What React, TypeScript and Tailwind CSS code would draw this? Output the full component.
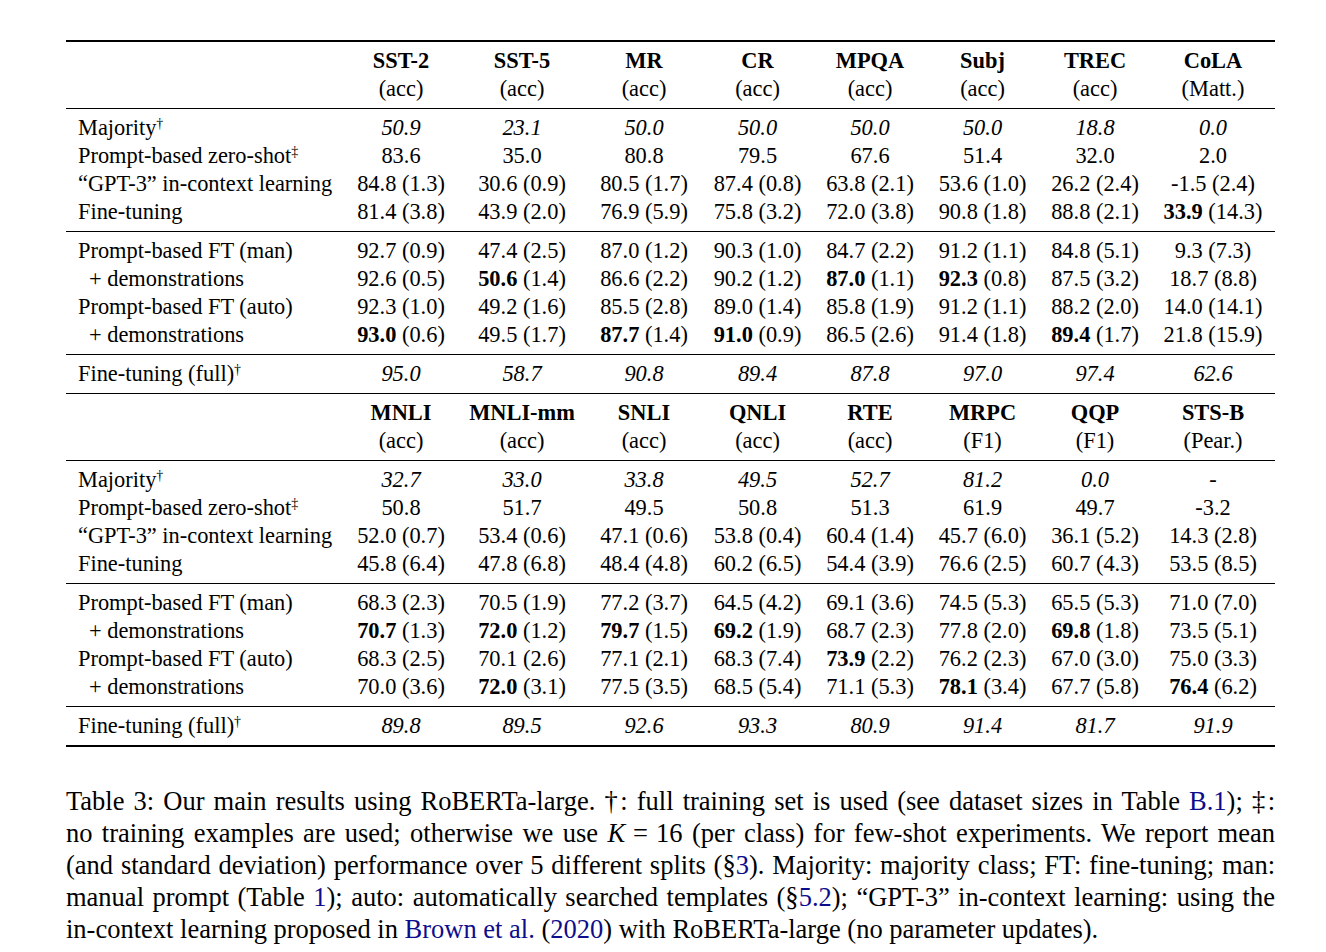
import type { ReactNode } from "react";

const COLS =
  "grid grid-cols-[279px_112px_130px_114px_113px_112px_113px_112px_124px]";

type RowData = {
  label: string;
  mark?: string;
  indent?: boolean;
  italic?: boolean;
  values: string[];
};

function Cell({ v, italic }: { v: string; italic?: boolean }) {
  // a leading * means the first number of the cell is bold
  if (v.startsWith("*")) {
    const parts = v.slice(1).split(" ");
    return (
      <span>
        <b className="font-bold">{parts[0]}</b> {parts.slice(1).join(" ")}
      </span>
    );
  }
  return <span className={italic ? "italic" : ""}>{v}</span>;
}

function Row({ row }: { row: RowData }) {
  return (
    <div className={`${COLS} h-[28px] leading-[28px]`}>
      <div className={row.indent ? "pl-[23px]" : "pl-[12px]"}>
        {row.label}
        {row.mark && <sup className="text-[14px]">{row.mark}</sup>}
      </div>
      {row.values.map((v, i) => (
        <div key={i} className="text-center whitespace-nowrap">
          <Cell v={v} italic={row.italic} />
        </div>
      ))}
    </div>
  );
}

function Header({ names, metrics }: { names: string[]; metrics: string[] }) {
  return (
    <div className="pt-[4px] pb-[5px]">
      <div className={`${COLS} h-[29px] leading-[29px] font-bold`}>
        <div />
        {names.map((n) => (
          <div key={n} className="text-center">
            {n}
          </div>
        ))}
      </div>
      <div className={`${COLS} h-[28px] leading-[28px]`}>
        <div />
        {metrics.map((m, i) => (
          <div key={i} className="text-center">
            {m}
          </div>
        ))}
      </div>
    </div>
  );
}

function Block({ rows }: { rows: RowData[] }) {
  return (
    <div className="pt-[5px] pb-[5px]">
      {rows.map((r, i) => (
        <Row key={i} row={r} />
      ))}
    </div>
  );
}

const thin = <div className="h-px bg-black" />;
const thick = <div className="h-[2px] bg-black" />;

const baseA: RowData[] = [
  { label: "Majority", mark: "†", italic: true, values: ["50.9", "23.1", "50.0", "50.0", "50.0", "50.0", "18.8", "0.0"] },
  { label: "Prompt-based zero-shot", mark: "‡", values: ["83.6", "35.0", "80.8", "79.5", "67.6", "51.4", "32.0", "2.0"] },
  { label: "“GPT-3” in-context learning", values: ["84.8 (1.3)", "30.6 (0.9)", "80.5 (1.7)", "87.4 (0.8)", "63.8 (2.1)", "53.6 (1.0)", "26.2 (2.4)", "-1.5 (2.4)"] },
  { label: "Fine-tuning", values: ["81.4 (3.8)", "43.9 (2.0)", "76.9 (5.9)", "75.8 (3.2)", "72.0 (3.8)", "90.8 (1.8)", "88.8 (2.1)", "*33.9 (14.3)"] },
];

const oursA: RowData[] = [
  { label: "Prompt-based FT (man)", values: ["92.7 (0.9)", "47.4 (2.5)", "87.0 (1.2)", "90.3 (1.0)", "84.7 (2.2)", "91.2 (1.1)", "84.8 (5.1)", "9.3 (7.3)"] },
  { label: "+ demonstrations", indent: true, values: ["92.6 (0.5)", "*50.6 (1.4)", "86.6 (2.2)", "90.2 (1.2)", "*87.0 (1.1)", "*92.3 (0.8)", "87.5 (3.2)", "18.7 (8.8)"] },
  { label: "Prompt-based FT (auto)", values: ["92.3 (1.0)", "49.2 (1.6)", "85.5 (2.8)", "89.0 (1.4)", "85.8 (1.9)", "91.2 (1.1)", "88.2 (2.0)", "14.0 (14.1)"] },
  { label: "+ demonstrations", indent: true, values: ["*93.0 (0.6)", "49.5 (1.7)", "*87.7 (1.4)", "*91.0 (0.9)", "86.5 (2.6)", "91.4 (1.8)", "*89.4 (1.7)", "21.8 (15.9)"] },
];

const fullA: RowData[] = [
  { label: "Fine-tuning (full)", mark: "†", italic: true, values: ["95.0", "58.7", "90.8", "89.4", "87.8", "97.0", "97.4", "62.6"] },
];

const baseB: RowData[] = [
  { label: "Majority", mark: "†", italic: true, values: ["32.7", "33.0", "33.8", "49.5", "52.7", "81.2", "0.0", "-"] },
  { label: "Prompt-based zero-shot", mark: "‡", values: ["50.8", "51.7", "49.5", "50.8", "51.3", "61.9", "49.7", "-3.2"] },
  { label: "“GPT-3” in-context learning", values: ["52.0 (0.7)", "53.4 (0.6)", "47.1 (0.6)", "53.8 (0.4)", "60.4 (1.4)", "45.7 (6.0)", "36.1 (5.2)", "14.3 (2.8)"] },
  { label: "Fine-tuning", values: ["45.8 (6.4)", "47.8 (6.8)", "48.4 (4.8)", "60.2 (6.5)", "54.4 (3.9)", "76.6 (2.5)", "60.7 (4.3)", "53.5 (8.5)"] },
];

const oursB: RowData[] = [
  { label: "Prompt-based FT (man)", values: ["68.3 (2.3)", "70.5 (1.9)", "77.2 (3.7)", "64.5 (4.2)", "69.1 (3.6)", "74.5 (5.3)", "65.5 (5.3)", "71.0 (7.0)"] },
  { label: "+ demonstrations", indent: true, values: ["*70.7 (1.3)", "*72.0 (1.2)", "*79.7 (1.5)", "*69.2 (1.9)", "68.7 (2.3)", "77.8 (2.0)", "*69.8 (1.8)", "73.5 (5.1)"] },
  { label: "Prompt-based FT (auto)", values: ["68.3 (2.5)", "70.1 (2.6)", "77.1 (2.1)", "68.3 (7.4)", "*73.9 (2.2)", "76.2 (2.3)", "67.0 (3.0)", "75.0 (3.3)"] },
  { label: "+ demonstrations", indent: true, values: ["70.0 (3.6)", "*72.0 (3.1)", "77.5 (3.5)", "68.5 (5.4)", "71.1 (5.3)", "*78.1 (3.4)", "67.7 (5.8)", "*76.4 (6.2)"] },
];

const fullB: RowData[] = [
  { label: "Fine-tuning (full)", mark: "†", italic: true, values: ["89.8", "89.5", "92.6", "93.3", "80.9", "91.4", "81.7", "91.9"] },
];

function Ref({ children }: { children: ReactNode }) {
  return <span className="text-[#0d0d8c]">{children}</span>;
}

function Line({ children, last }: { children: ReactNode; last?: boolean }) {
  return (
    <div className={last ? "text-left" : "text-justify [text-align-last:justify]"}>
      {children}
    </div>
  );
}

export default function App() {
  return (
    <div className="w-[1326px] h-[952px] bg-white text-black [font-family:'Liberation_Serif','Times_New_Roman',serif] overflow-hidden">
      <div className="ml-[66px] w-[1209px] pt-[40px] text-[22.4px]">
        {thick}
        <Header
          names={["SST-2", "SST-5", "MR", "CR", "MPQA", "Subj", "TREC", "CoLA"]}
          metrics={["(acc)", "(acc)", "(acc)", "(acc)", "(acc)", "(acc)", "(acc)", "(Matt.)"]}
        />
        {thin}
        <Block rows={baseA} />
        {thin}
        <Block rows={oursA} />
        {thin}
        <Block rows={fullA} />
        {thin}
        <Header
          names={["MNLI", "MNLI-mm", "SNLI", "QNLI", "RTE", "MRPC", "QQP", "STS-B"]}
          metrics={["(acc)", "(acc)", "(acc)", "(acc)", "(acc)", "(F1)", "(F1)", "(Pear.)"]}
        />
        {thin}
        <Block rows={baseB} />
        {thin}
        <Block rows={oursB} />
        {thin}
        <Block rows={fullB} />
        {thick}
      </div>

      <div className="ml-[66px] w-[1209px] mt-[38px] text-[26.5px] leading-[32px]">
        <Line>
          Table 3: Our main results using RoBERTa-large. †: full training set is used (see dataset sizes in Table <Ref>B.1</Ref>); ‡:
        </Line>
        <Line>
          no training examples are used; otherwise we use <span className="italic">K</span>
          <span className="mx-[8px]">=</span>16 (per class) for few-shot experiments. We report mean
        </Line>
        <Line>
          (and standard deviation) performance over 5 different splits (§<Ref>3</Ref>). Majority: majority class; FT: fine-tuning; man:
        </Line>
        <Line>
          manual prompt (Table <Ref>1</Ref>); auto: automatically searched templates (§<Ref>5.2</Ref>); “GPT-3” in-context learning: using the
        </Line>
        <Line last>
          in-context learning proposed in <Ref>Brown et al.</Ref> (<Ref>2020</Ref>) with RoBERTa-large (no parameter updates).
        </Line>
      </div>
    </div>
  );
}
